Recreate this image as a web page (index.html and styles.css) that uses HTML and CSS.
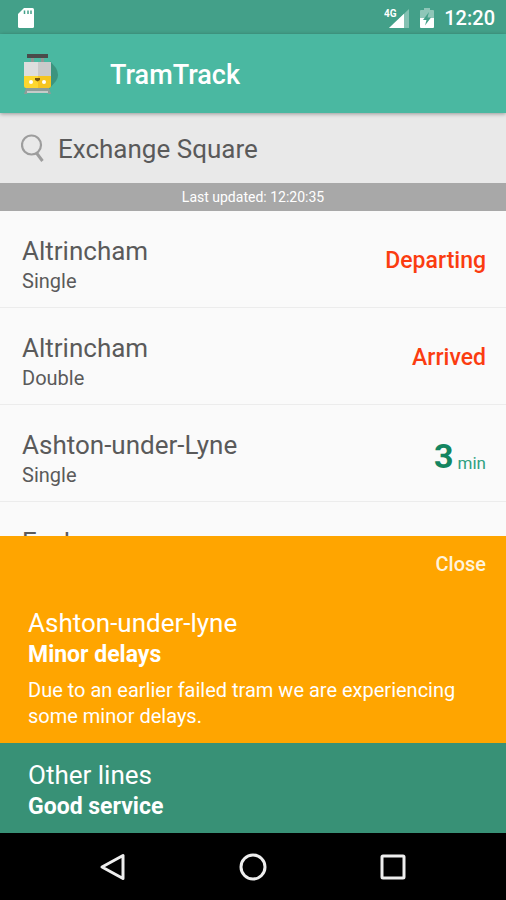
FILE: index.html
```html
<!DOCTYPE html>
<html lang="en">
<head>
<meta charset="utf-8">
<meta name="viewport" content="width=device-width, initial-scale=1">
<title>TramTrack</title>
<link rel="stylesheet" href="styles.css">
</head>
<body>
<div class="status">
  <svg class="status-card" width="18" height="22" viewBox="0 0 18 22" aria-hidden="true">
    <path fill="#fff" d="M7 1h8.500a1.500 1.500 0 0 1 1.500 1.500v17a1.500 1.500 0 0 1-1.500 1.500h-13A1.500 1.500 0 0 1 1 19.500V7z"/>
    <path stroke="#43a089" stroke-width="1.500" d="M7.500 3.500v3.500M11 3.500v3.500M14 3.500v3.500"/>
  </svg>
  <div class="status-right">
    <svg width="26" height="24" viewBox="0 0 26 24" aria-hidden="true">
      <path fill="#fff" fill-opacity=".35" d="M25 3v19H5z"/>
      <path fill="#fff" d="M20 7.750V22H5z"/>
      <text class="signal" x="0" y="11">4G</text>
    </svg>
    <svg width="14" height="22" viewBox="0 0 14 22" aria-hidden="true">
      <path fill="#fff" fill-opacity=".4" d="M4 1h6v2h3a1 1 0 0 1 1 1v7H0V4a1 1 0 0 1 1-1h3z"/>
      <path fill="#fff" d="M0 11h14v9a1 1 0 0 1-1 1H1a1 1 0 0 1-1-1z"/>
      <path fill="#43a089" d="M9 5l-6 8h3.500L5 18.500l6-8H7.500z"/>
    </svg>
    <span class="clock">12:20</span>
  </div>
</div>
<header class="appbar">
  <svg class="logo" width="38" height="44" viewBox="0 0 38 44" aria-hidden="true">
    <path fill="#3c947e" d="M28 8l6 7q4 7 0 13l-7 8z"/>
    <path fill="#4a4a4a" d="M5 1h21v4H5z"/>
    <path fill="#8e9794" d="M9 5h3v4H9zM19 5h3v4h-3z"/>
    <path fill="#dedede" d="M2 9h14v15H2z"/>
    <path fill="#cacaca" d="M16 9h13v15H16z"/>
    <path fill="#fdd72f" d="M2 23h14v12H4q-2 0-2-2z"/>
    <path fill="#f6c51f" d="M16 23h13v10q0 2-2 2H16z"/>
    <circle cx="9" cy="29" r="2" fill="#fff"/>
    <circle cx="22" cy="29" r="2" fill="#fff"/>
    <path fill="#75550f" d="M13 25h5v2l-2.500 1.500L13 27z"/>
    <path fill="#8e9d98" d="M4 35h23l2 6h-3l-1-2H6l-1 2H2z"/>
    <path fill="#c6cbc9" d="M5 38h21v2H5z"/>
  </svg>
  <h1>TramTrack</h1>
</header>
<label class="search">
  <svg width="24" height="30" viewBox="0 0 24 30" fill="none" stroke="#9d9d9d" stroke-width="2.200" aria-hidden="true">
    <circle cx="10.500" cy="11" r="9.500"/>
    <path stroke-width="3" d="M15.500 19l6 8"/>
  </svg>
  <input type="text" value="Exchange Square" aria-label="Stop">
</label>
<p class="updated">Last updated: 12:20:35</p>
<ul class="trams">
  <li><div><h2>Altrincham</h2><p>Single</p></div><strong class="now">Departing</strong></li>
  <li><div><h2>Altrincham</h2><p>Double</p></div><strong class="now">Arrived</strong></li>
  <li><div><h2>Ashton-under-Lyne</h2><p>Single</p></div><span class="wait"><b>3</b><span>min</span></span></li>
  <li><div><h2>Eccles</h2></div></li>
</ul>
<section class="notice delays">
  <button class="close" type="button">Close</button>
  <h2>Ashton-under-lyne</h2>
  <h3>Minor delays</h3>
  <p>Due to an earlier failed tram we are experiencing some minor delays.</p>
</section>
<section class="notice good">
  <h2>Other lines</h2>
  <h3>Good service</h3>
</section>
<nav class="navbar">
  <button type="button" aria-label="Back"><svg width="30" height="30" viewBox="0 0 30 30"><path d="M25 3.500v23L4 15z"/></svg></button>
  <button type="button" aria-label="Home"><svg width="30" height="30" viewBox="0 0 30 30"><circle cx="15" cy="15" r="12"/></svg></button>
  <button type="button" aria-label="Recent apps"><svg width="30" height="30" viewBox="0 0 30 30"><rect x="4" y="4" width="22" height="22" rx="1"/></svg></button>
</nav>
</body>
</html>
```
FILE: styles.css
```css
* {
  box-sizing: border-box;
}

body,
h1,
h2,
h3,
p,
ul {
  margin: 0;
  padding: 0;
}

body {
  display: flex;
  flex-direction: column;
  height: 100vh;
  background: #fafafa;
  color: #5a5a5a;
  font-family: Roboto, "Liberation Sans", sans-serif;
}

svg {
  display: block;
  flex: none;
}

button {
  border: 0;
  background: none;
  font: inherit;
  color: inherit;
}

.status {
  flex: none;
  display: flex;
  align-items: center;
  justify-content: space-between;
  height: 34px;
  padding: 2px 11px 0 17px;
  background: #43a089;
  color: #fff;
}

.status-right {
  display: flex;
  align-items: center;
  gap: 10px;
}

.signal {
  fill: #fff;
  font-size: 10px;
  font-weight: 700;
}

.clock {
  font-size: 20px;
  font-weight: 500;
}

.appbar {
  flex: none;
  position: relative;
  display: flex;
  align-items: center;
  gap: 50px;
  height: 79px;
  padding: 2px 22px 0;
  background: #4ab8a1;
  box-shadow: 0 1px 4px rgba(0, 0, 0, 0.35);
  color: #fff;
}

.appbar h1 {
  font-size: 27px;
  font-weight: 500;
}

.search {
  flex: none;
  display: flex;
  align-items: center;
  gap: 13px;
  height: 70px;
  padding: 2px 21px 0;
  background: #e9e9e9;
}

.search input {
  flex: 1;
  min-width: 0;
  padding: 0;
  border: 0;
  outline: 0;
  background: none;
  color: #5a5a5a;
  font: 26px Roboto, "Liberation Sans", sans-serif;
}

.updated {
  flex: none;
  background: #a8a8a8;
  color: #fff;
  font-size: 14px;
  line-height: 28px;
  text-align: center;
}

.trams {
  flex: 1 1 0;
  min-height: 0;
  overflow: hidden;
  list-style: none;
}

.trams li {
  display: flex;
  align-items: center;
  justify-content: space-between;
  height: 97px;
  padding: 0 20px 0 22px;
  border-bottom: 1px solid #ececec;
}

.trams li > div {
  align-self: flex-start;
  padding-top: 24px;
}

.trams h2 {
  font-size: 26px;
  font-weight: 400;
  line-height: 32px;
}

.trams p {
  font-size: 20px;
  line-height: 28px;
}

.now {
  padding-top: 2px;
  color: #fb3c10;
  font-size: 23px;
  font-weight: 500;
}

.wait {
  display: flex;
  align-items: flex-end;
  gap: 4px;
  padding-top: 6px;
  color: #30a080;
  font-size: 17px;
  line-height: 26px;
}

.wait b {
  color: #148560;
  font-size: 34px;
  line-height: 40px;
}

.notice {
  flex: none;
  padding: 16px 28px 8px;
  color: #fff;
}

.notice h2 {
  font-size: 26px;
  font-weight: 400;
  line-height: 32px;
}

.notice h3 {
  font-size: 23px;
  font-weight: 700;
  line-height: 32px;
}

.notice p {
  margin-top: 6px;
  font-size: 20px;
  line-height: 26px;
}

.delays {
  display: flex;
  flex-direction: column;
  padding: 16px 28px 14px;
  background: #ffa500;
}

.close {
  align-self: flex-end;
  margin: 0 -8px 31px 0;
  padding: 0;
  font-size: 20px;
  font-weight: 500;
  line-height: 24px;
  color: #fff3dc;
}

.good {
  padding-bottom: 10px;
  background: #389176;
}

.navbar {
  flex: none;
  display: flex;
  justify-content: center;
  gap: 80px;
  height: 67px;
  background: #000;
}

.navbar button {
  display: grid;
  place-items: center;
  width: 60px;
  padding: 0;
}

.navbar svg {
  fill: none;
  stroke: #eee;
  stroke-width: 3;
  stroke-linejoin: round;
}
```
